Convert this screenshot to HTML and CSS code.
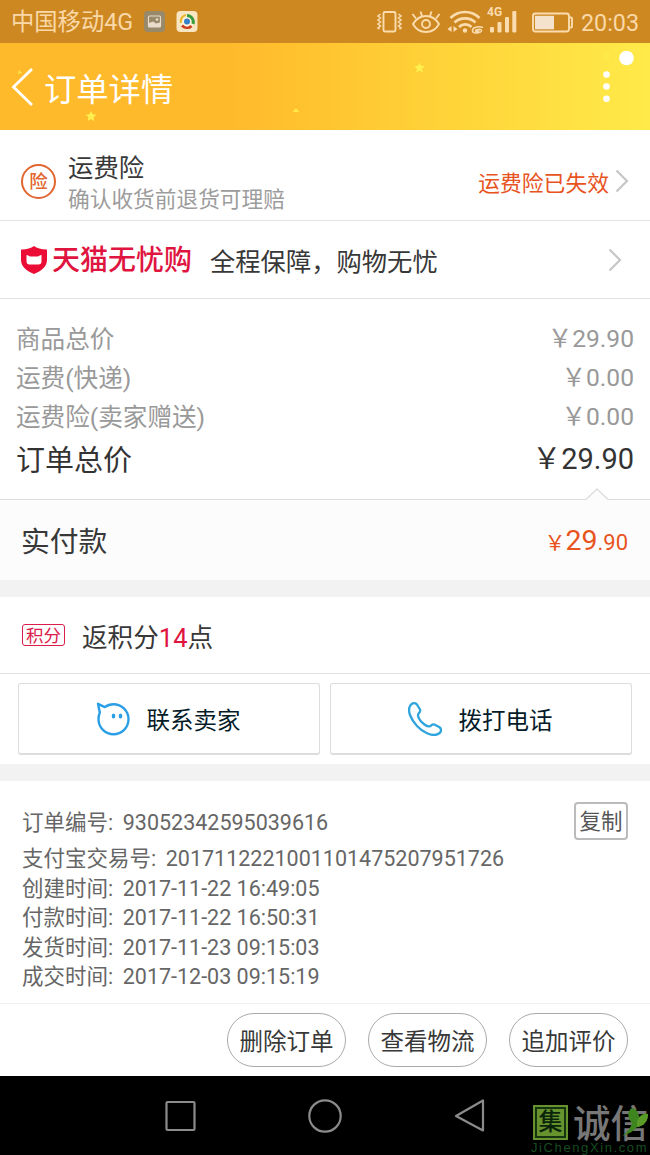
FILE: index.html
```html
<!DOCTYPE html>
<html lang="zh-CN">
<head>
<meta charset="utf-8">
<title>订单详情</title>
<link rel="stylesheet" href="styles.css">
</head>
<body>
<div class="phone">
  <div class="status">
    <span class="carrier">中国移动4G</span>
    <svg class="app-icons" width="54" height="22" viewBox="0 0 54 22">
      <rect x="0" y="0" width="21" height="21" rx="4" fill="#98896b"/>
      <rect x="4.5" y="5" width="12" height="11" rx="1" fill="none" stroke="#e8dccb" stroke-width="1.2"/>
      <path d="M5 12l4-1.500 3 2 4-1v4.500H5z" fill="#e8dccb"/><circle cx="13" cy="8.500" r="1.300" fill="#e8dccb"/>
      <rect x="32.500" y="0" width="21" height="21" rx="4" fill="#f8e5c2"/>
      <circle cx="43" cy="10.500" r="7" fill="#fff3da"/>
      <path d="M37 12a6.500 6.500 0 0 1 5-8" fill="none" stroke="#e9b62c" stroke-width="2.200"/>
      <path d="M43 4.500a6.500 6.500 0 0 1 6 8.500" fill="none" stroke="#389c3f" stroke-width="3"/>
      <path d="M38 14.500c3 3 7 3 9.500.5" fill="none" stroke="#cc3b1e" stroke-width="2.600"/>
      <circle cx="43" cy="10.500" r="3" fill="#3681c9"/>
    </svg>
    <svg class="status-icons" width="200" height="34" viewBox="375 5 200 34" fill="none" stroke="#fbdcae" stroke-width="1.900">
      <rect x="383.500" y="12" width="12" height="19.500" rx="1.500"/>
      <path d="M380.500 14l-2.500 2 2.500 2-2.500 2 2.500 2-2.500 2 2.500 2-2.500 2 1.500 1M398.500 14l2.500 2-2.500 2 2.500 2-2.500 2 2.500 2-2.500 2 2.500 2-1.500 1" stroke-width="1.600"/>
      <path d="M413 24c4-6.500 8-8 13-8s9 1.500 13 8c-3 5.500-7.500 8-13 8s-10-2.500-13-8z"/>
      <circle cx="426" cy="24" r="4"/>
      <path d="M412.500 14l3.500 4.500M420.500 11.500l1.500 4.500M431.500 11.500L430 16M439.500 14l-3.500 4.500"/>
      <path d="M450.500 18c8-8 21-8 29 0M454.500 22.500c6-5.500 15-5.500 21 0M459 27c3.500-3.500 9-3.500 12.500 0" stroke-width="2.700"/>
      <circle cx="465" cy="30.500" r="2.200" fill="#fbdcae" stroke="none"/>
      <path d="M451.500 26v6l-4-3zM453.500 26v6l4-3z" fill="#fbdcae" stroke="none"/>
      <path d="M483 27.500c-5-2-11 0-10.500 3.500.5 3.500 9.500 2 9-.5-.3-2-6.500-1-6 .5.300 1 3 .5 4-.5" stroke-width="1.500"/>
      <g fill="#fbdcae" stroke="none"><rect x="490" y="27" width="4" height="5.500" rx="1"/><rect x="497.500" y="22" width="4" height="10.500" rx="1"/><rect x="505" y="17" width="4" height="15.500" rx="1"/><rect x="512.300" y="11" width="4" height="21.500" rx="1"/></g>
      <text class="net" x="487" y="16">4G</text>
      <rect x="533" y="13.500" width="36" height="18" rx="2.500"/>
      <rect x="535" y="15.800" width="19" height="13.500" fill="#f4e2cc" stroke="none"/>
      <path d="M569.500 17.500h1.500q1 0 1 1v8q0 1-1 1h-1.500"/>
    </svg>
    <span class="clock">20:03</span>
  </div>

  <div class="header">
    <svg class="back" width="24" height="42" viewBox="0 0 24 42"><path d="M22 3L3.500 21 22 39" fill="none" stroke="#fff" stroke-width="2.800"/></svg>
    <h1 class="title">订单详情</h1>
    <svg class="header-art" width="650" height="87" viewBox="0 0 650 87">
      <g fill="#fff04f">
        <path d="M91 68l1.500 3.300 3.800.4-2.800 2.500.8 3.800-3.300-2-3.300 2 .8-3.800-2.800-2.500 3.800-.4z"/>
        <path d="M419.500 19.500l1.500 3.300 3.800.4-2.800 2.500.8 3.800-3.300-2-3.300 2 .8-3.800-2.800-2.500 3.800-.4z"/>
        <path d="M296 65l3.500 4h-7zM19 27l3 3-4 1z" opacity=".8"/>
        <circle cx="607" cy="13" r="3" opacity=".5"/>
      </g>
      <g fill="#fff"><circle cx="626.500" cy="15" r="7.300"/><circle cx="606.500" cy="31.500" r="3.300"/><circle cx="606.500" cy="43.500" r="3.300"/><circle cx="606.500" cy="55.800" r="3.300"/></g>
    </svg>
  </div>

  <div class="row insurance">
    <span class="badge-round">险</span>
    <div class="insurance-text"><div class="name">运费险</div><div class="hint">确认收货前退货可理赔</div></div>
    <span class="expired">运费险已失效</span>
    <svg class="chevron" width="14" height="24" viewBox="0 0 14 24"><path d="M1.500 1.500L12 12 1.500 22.500" fill="none" stroke="#c6c6c6" stroke-width="2.200"/></svg>
  </div>
  <div class="row worry-free">
    <svg class="shield" width="26" height="28" viewBox="0 0 26 28"><path d="M13 0c3 2.300 7 3.200 12.300 3.500.7 0 .7.300.7 1V14c0 6.500-5.500 11-13 14C5.500 25 0 20.500 0 14V4.500c0-.7 0-1 .7-1C6 3.200 10 2.300 13 0z" fill="#eb0d36"/><path d="M5.500 9c2 0 2.500 1.500 4 1.500h7c1.500 0 2-1.500 4-1.500v6c0 2.500-1 3.500-3 3.500h-9c-2 0-3-1-3-3.500z" fill="#fff"/></svg>
    <span class="brand">天猫无忧购</span>
    <span class="slogan">全程保障，购物无忧</span>
    <svg class="chevron" width="14" height="24" viewBox="0 0 14 24"><path d="M1.500 1.500L12 12 1.500 22.500" fill="none" stroke="#c6c6c6" stroke-width="2.200"/></svg>
  </div>

  <div class="summary">
    <div class="line"><span>商品总价</span><span>￥29.90</span></div>
    <div class="line"><span>运费(快递)</span><span>￥0.00</span></div>
    <div class="line"><span>运费险(卖家赠送)</span><span>￥0.00</span></div>
    <div class="line total"><span>订单总价</span><span>￥29.90</span></div>
  </div>
  <div class="paid">
    <svg class="notch" width="24" height="13" viewBox="0 0 24 13"><path d="M1 12.500L12 2l11 10.500v.5H1z" fill="#fcfcfc"/><path d="M0 12.500h1L12 2l11 10.500h1" fill="none" stroke="#ddd" stroke-width="1.300"/></svg>
    <span class="paid-label">实付款</span>
    <span class="price"><span class="yen">￥</span><span class="int">29</span>.90</span>
  </div>
  <div class="band"></div>

  <div class="row points">
    <span class="tag">积分</span>
    <span class="points-text">返积分<span class="num">14</span>点</span>
  </div>
  <div class="contact">
    <div class="contact-btn">
      <svg width="34" height="34" viewBox="0 0 34 34"><path d="M3.800 10.500L2 1.800l6.800 3.300C11.500 3 14 2.200 17.500 2.200a15 15 0 1 1-15 15c0-2.500.5-4.700 1.300-6.700z" fill="none" stroke="#2b9fe6" stroke-width="2.400" stroke-linejoin="round"/><ellipse cx="17.500" cy="14" rx="1.800" ry="2.500" fill="#2b9fe6"/><ellipse cx="24.500" cy="14" rx="1.800" ry="2.500" fill="#2b9fe6"/></svg>
      <span>联系卖家</span>
    </div>
    <div class="contact-btn">
      <svg width="34" height="34" viewBox="0 0 34 34"><path d="M3.500 2.200C5.500.5 8 1 9.300 3l2.700 4.500c1.300 2.600-2.500 3.600-2 6.300.6 3 3.500 6.500 6.500 8.700 2 1.500 4.500 2.500 6 1.500s1.800-2.300 4-1.500l5 2.800c2.200 1.500 1.800 4.200.2 5.700-3 2.500-8.200 2.300-12.700.3C12 28.200 5 21 2 13 .6 9 .2 5 3.500 2.200z" fill="none" stroke="#2fa5dd" stroke-width="2.300"/></svg>
      <span>拨打电话</span>
    </div>
  </div>
  <div class="band"></div>

  <div class="info">
    <div class="info-line first"><span>订单编号:</span><span>93052342595039616</span><span class="copy">复制</span></div>
    <div class="info-line"><span>支付宝交易号:</span><span>2017112221001101475207951726</span></div>
    <div class="info-line"><span>创建时间:</span><span>2017-11-22 16:49:05</span></div>
    <div class="info-line"><span>付款时间:</span><span>2017-11-22 16:50:31</span></div>
    <div class="info-line"><span>发货时间:</span><span>2017-11-23 09:15:03</span></div>
    <div class="info-line"><span>成交时间:</span><span>2017-12-03 09:15:19</span></div>
  </div>
  <div class="actions">
    <span class="pill">删除订单</span><span class="pill">查看物流</span><span class="pill">追加评价</span>
  </div>

  <div class="nav">
    <svg width="330" height="40" viewBox="160 1096 330 40" fill="none" stroke="#8b8b8b" stroke-width="2.200">
      <rect x="166.500" y="1102" width="28" height="28" rx="1"/><circle cx="325" cy="1116" r="15.700"/><path d="M483 1100.500v30L456 1116z" stroke-linejoin="round"/>
    </svg>
    <div class="mark">
      <div class="mark-top"><span class="seal">集</span><span class="mark-name">诚信</span></div>
      <div class="mark-url">JiChengXin.com</div>
      <svg class="leaf" width="30" height="34" viewBox="0 0 30 34"><path d="M13 17C8 12 8 5 13 2c4 1 7 4 7 9 3-3 5-4 9-3 0 7-4 12-11 13-3 4-8 7-15 9 5-3 8-7 10-13z" fill="#3f851f"/><path d="M18 15c3-5 6-7 11-7 0 7-4 12-11 13z" fill="#5b9b28"/></svg>
    </div>
  </div>
</div>
</body>
</html>
```
FILE: styles.css
```css
* { box-sizing: border-box; }
body { margin: 0; background: #fff; font-family: Roboto, "Noto Sans CJK SC", sans-serif; }
svg { display: block; flex: none; }
.phone { width: 650px; height: 1155px; overflow: hidden; display: flex; flex-direction: column; color: #383838; white-space: nowrap; }
.phone > div { flex: none; }

.status { height: 43px; background: #cd8822; color: #fad8a8; display: flex; align-items: center; padding: 0 11px; font-size: 23.300px; }
.carrier { width: 133px; line-height: 44px; padding-top: 1px; }
.status-icons { margin-left: 177px; }
.clock { margin-left: auto; padding-top: 2px; }
.net { font: 700 12px Roboto, sans-serif; fill: #fbdcae; stroke: none; }

.header { height: 87px; position: relative; display: flex; align-items: center; padding-left: 10px; background: linear-gradient(90deg, #ffba2c 0%, #ffba2c 35%, #ffc530 50%, #ffd83c 75%, #ffea4a 100%); }
.title { margin: 6px 0 0 10px; font-size: 32.300px; font-weight: 400; color: #fff; line-height: 48px; }
.header-art { position: absolute; left: 0; top: 0; }

.row { display: flex; align-items: center; border-bottom: 1px solid #e2e2e2; }
.insurance { height: 91px; padding: 8px 21px 0 21px; }
.badge-round { width: 35px; height: 35px; border: 2px solid #e2662f; border-radius: 50%; color: #e2662f; font-size: 18.500px; font-weight: 500; line-height: 32px; text-align: center; margin-top: 4px; }
.insurance-text { margin-left: 12px; padding-top: 10px; }
.name { font-size: 25.400px; line-height: 32px; }
.hint { font-size: 21.700px; line-height: 32px; color: #9c9c9c; }
.expired { margin-left: auto; font-size: 21.800px; color: #e8541e; padding-top: 4px; }
.insurance .chevron { margin: 4px 0 0 6px; }
.worry-free { height: 78px; padding: 0 28px 0 21px; }
.brand { margin-left: 5px; font-size: 28px; font-weight: 500; color: #e0153f; line-height: 40px; padding-top: 3px; }
.slogan { margin-left: 18px; font-size: 25.300px; }
.worry-free .chevron { margin-left: auto; }

.summary { height: 200px; padding: 20px 16px 0 16px; color: #999; font-size: 24.600px; }
.line { display: flex; justify-content: space-between; height: 39px; line-height: 39px; }
.line span:first-child { padding-top: 1px; }
.total { height: 46px; line-height: 48px; font-size: 29px; color: #333; }
.total span:last-child { line-height: 46px; }
.paid { height: 81px; position: relative; border-top: 1px solid #ddd; background: #fcfcfc; display: flex; align-items: center; justify-content: space-between; padding: 0 22px 0 21px; font-size: 28.800px; }
.paid-label { padding-bottom: 2px; }
.notch { position: absolute; left: 585px; top: -13px; }
.price { color: #e8541e; font-size: 22px; line-height: 34px; padding-top: 3px; }
.int { font-size: 28.500px; }
.yen { font-size: 21px; }
.band { height: 17px; background: #f2f2f2; }

.points { height: 77px; padding: 0 22px; }
.tag { width: 43px; height: 22px; border: 1px solid #dc1c4b; border-radius: 3px; color: #dc1c4b; font-size: 17.500px; line-height: 22px; text-align: center; }
.points-text { margin-left: 17px; font-size: 25.600px; }
.num { color: #e0153f; }
.contact { height: 90px; padding: 9px 18px; display: flex; gap: 10px; }
.contact-btn { flex: 1; border: 1px solid #ddd; border-bottom-width: 2px; border-radius: 3px; display: flex; align-items: center; justify-content: center; gap: 17px; padding-right: 2px; font-size: 23.500px; color: #051b28; }
.contact-btn span { padding-top: 1px; }

.info { height: 223px; padding: 22px 22px 0 22px; font-size: 21.500px; color: #666; border-bottom: 1px solid #f0f0f0; }
.info-line { display: flex; gap: 9.500px; align-items: center; height: 29.500px; line-height: 29.500px; }
.first { height: 38px; margin-bottom: 3px; padding-top: 1px; }
.copy { margin: -3px 0 0 auto; width: 54px; height: 38px; border: 2px solid #bbb; border-radius: 4px; color: #555; line-height: 35px; text-align: center; }
.actions { height: 72px; display: flex; justify-content: flex-end; align-items: center; gap: 22px; padding: 0 22px; }
.pill { width: 119px; height: 54px; border: 1px solid #aaa; border-radius: 27px; font-size: 23.500px; line-height: 57px; text-align: center; }

.nav { height: 79px; background: #000; display: flex; padding: 20px 0 0 160px; }
.mark { position: relative; width: 120px; margin: 9px 0 0 41px; }
.mark-top { display: flex; align-items: center; height: 35px; gap: 5px; }
.seal { width: 35px; height: 35px; margin-left: 2px; background: #66932d; border: 2px solid #66932d; box-shadow: inset 0 0 0 2px #16340f; color: #0b250b; font-size: 24px; line-height: 31px; text-align: center; font-weight: 500; }
.mark-name { font-size: 37.500px; line-height: 40px; padding-top: 2px; color: #777; font-weight: 500; }
.mark-url { font-family: "Liberation Sans", sans-serif; font-size: 13px; line-height: 15px; letter-spacing: 1.600px; color: #164d20; }
.leaf { position: absolute; left: 88px; top: 1px; }
```
